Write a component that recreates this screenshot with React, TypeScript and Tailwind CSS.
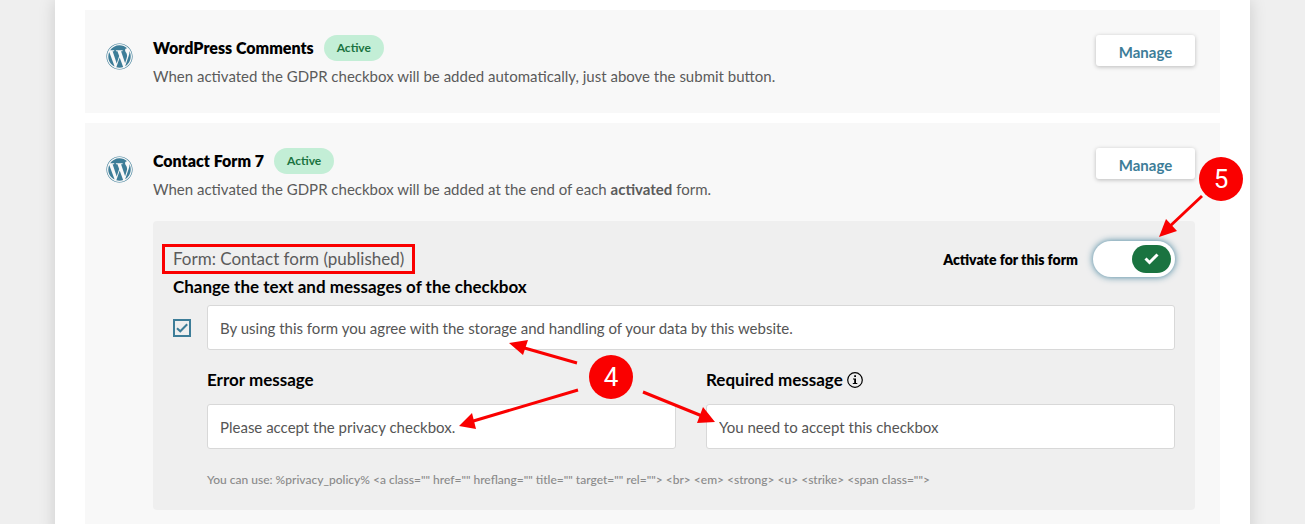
import { useId, useState, type ReactNode } from 'react';
import { FaWordpress } from 'react-icons/fa';

function Integration({ name, description, children }: { name: string; description: ReactNode; children?: ReactNode }) {
  return (
    <section className="bg-[#f8f8f8] pt-[25px] pr-[25px] pb-[27px] pl-[21px]">
      <div className="flex items-start">
        <FaWordpress className="mt-2 size-[27px] shrink-0 text-[#3d7d98]" aria-hidden="true" />
        <div className="ml-5 min-w-0 flex-1">
          <div className="flex items-center gap-2.5">
            <h2 className="text-[16px] leading-[26px] font-extrabold text-black">{name}</h2>
            <span className="rounded-full bg-[#c3eed6] px-[13px] text-[12px] leading-[26px] font-bold text-[#1a7340]">
              Active
            </span>
          </div>
          <p className="mt-[5px] text-[15px] leading-5 text-[#5b5b5b]">{description}</p>
        </div>
        <button
          type="button"
          className="h-[31px] w-[99px] shrink-0 rounded-[3px] bg-white pt-[3px] text-[15px] leading-5 font-bold text-[#3d7d98] shadow-[0_1px_4px_rgba(0,0,0,0.25)]"
        >
          Manage
        </button>
      </div>
      {children}
    </section>
  );
}

const fieldClass =
  'block h-[45px] w-full rounded-[3px] border border-[#d8d8d8] bg-white px-3 text-[15px] text-[#555] outline-none';

function ContactForm() {
  const id = useId();
  const [active, setActive] = useState(true);
  const [custom, setCustom] = useState(true);
  return (
    <div className="relative mt-[22px] ml-[47px] rounded-[4px] bg-[#efefef] px-5 pt-5 pb-[21px]">
      <div className="flex h-9 items-center justify-between">
        <h3 className="-ml-[11px] border-[3px] border-[#fa0000] px-2 text-[17px] leading-6 text-[#5b5b5b]">
          Form: Contact form (published)
        </h3>
        <label className="flex items-center gap-[15px] text-[14px] font-extrabold text-black">
          Activate for this form
          <span className="grid h-9 w-[82px] rounded-full bg-white p-1 shadow-[0_0_7px_#3d7d98]">
            <input
              type="checkbox"
              role="switch"
              checked={active}
              onChange={(e) => setActive(e.target.checked)}
              className="peer col-start-1 row-start-1 size-full appearance-none rounded-full outline-none"
            />
            <span className="pointer-events-none col-start-1 row-start-1 flex h-7 w-[39px] items-center justify-center justify-self-start rounded-full bg-[#999] peer-checked:justify-self-end peer-checked:bg-[#1a7340]">
              <svg className="h-3 w-[15px]" viewBox="0 0 15 12" fill="none" stroke="white" strokeWidth="3" aria-hidden="true">
                <path d="M1.5 5.5 5.5 9.5 13.5 1.5" />
              </svg>
            </span>
          </span>
        </label>
      </div>
      <h4 className="text-[17px] leading-5 font-bold text-black">Change the text and messages of the checkbox</h4>
      <div className="mt-2 flex items-center gap-4">
        <span className="grid size-[18px] shrink-0">
          <input
            type="checkbox"
            aria-label="Use custom texts"
            checked={custom}
            onChange={(e) => setCustom(e.target.checked)}
            className="peer col-start-1 row-start-1 size-[18px] appearance-none border-2 border-[#3d7d98]"
          />
          <svg
            className="pointer-events-none invisible col-start-1 row-start-1 size-[18px] peer-checked:visible"
            viewBox="0 0 18 18"
            fill="none"
            stroke="#3d7d98"
            strokeWidth="2"
            aria-hidden="true"
          >
            <path d="M4 9.2 7.3 12.3 14.2 5.2" />
          </svg>
        </span>
        <input
          className={fieldClass}
          aria-label="Checkbox text"
          defaultValue="By using this form you agree with the storage and handling of your data by this website."
        />
      </div>
      <div className="mt-5 ml-[34px] grid grid-cols-2 gap-[30px]">
        <div>
          <label htmlFor={id + 'error'} className="block text-[17px] leading-5 font-bold text-black">
            Error message
          </label>
          <input id={id + 'error'} className={'mt-[14px] ' + fieldClass} defaultValue="Please accept the privacy checkbox." />
        </div>
        <div>
          <div className="flex items-center gap-1">
            <label htmlFor={id + 'required'} className="text-[17px] leading-5 font-bold text-black">
              Required message
            </label>
            <svg className="size-4" viewBox="0 0 16 16" fill="none" aria-hidden="true">
              <circle cx="8" cy="8" r="7.3" stroke="black" strokeWidth="1.2" />
              <path d="M7.2 3.3h1.8v1.8H7.2zM6 6.5h3v4.6h1.3v1H5.8v-1h1.4V7.5H6z" fill="black" />
            </svg>
          </div>
          <input id={id + 'required'} className={'mt-[14px] ' + fieldClass} defaultValue="You need to accept this checkbox" />
        </div>
      </div>
      <p className="mt-[22px] ml-[34px] text-[12px] leading-[18px] font-medium text-[#8a8a8a]">
        {'You can use: %privacy_policy% <a class="" href="" hreflang="" title="" target="" rel=""> <br> <em> <strong> <u> <strike> <span class="">'}
      </p>

      <svg
        className="pointer-events-none absolute top-[114px] left-1/2 -ml-[219px] h-[100px] w-[265px]"
        viewBox="0 0 265 100"
        aria-hidden="true"
      >
        <g stroke="#fa0000" strokeWidth="3">
          <path d="M122 28 66 12M123 55 15 87M188 57 252 83" />
        </g>
        <path d="M54 8 73 5 68 20ZM4 91 17 78 21 94ZM260 87 248 72 242 88Z" fill="#fa0000" />
      </svg>
      <span className="pointer-events-none absolute top-[134px] left-1/2 -ml-[85px] flex size-11 items-center justify-center rounded-full bg-[#fa0000] font-['Roboto',sans-serif] text-[26px] text-white">
        4
      </span>
      <svg
        className="pointer-events-none absolute -top-[66px] -right-[50px] h-[85px] w-[90px]"
        viewBox="0 0 90 85"
        aria-hidden="true"
      >
        <path d="M47 41 13 73" stroke="#fa0000" strokeWidth="3" />
        <path d="M4 82 11 64 22 76Z" fill="#fa0000" />
      </svg>
      <span className="pointer-events-none absolute -top-16 -right-12 flex size-11 items-center justify-center rounded-full bg-[#fa0000] font-['Roboto',sans-serif] text-[26px] text-white">
        5
      </span>
    </div>
  );
}

export default function App() {
  return (
    <div className="min-h-screen bg-[#efefef] px-[55px] font-['Lato','Liberation_Sans',sans-serif]">
      <main className="flex min-h-screen flex-col gap-2.5 bg-white px-[30px] pt-2.5 shadow-[0_0_16px_rgba(0,0,0,0.15)]">
        <Integration
          name="WordPress Comments"
          description="When activated the GDPR checkbox will be added automatically, just above the submit button."
        />
        <Integration
          name="Contact Form 7"
          description={
            <>
              When activated the GDPR checkbox will be added at the end of each <strong>activated</strong> form.
            </>
          }
        >
          <ContactForm />
        </Integration>
      </main>
    </div>
  );
}
